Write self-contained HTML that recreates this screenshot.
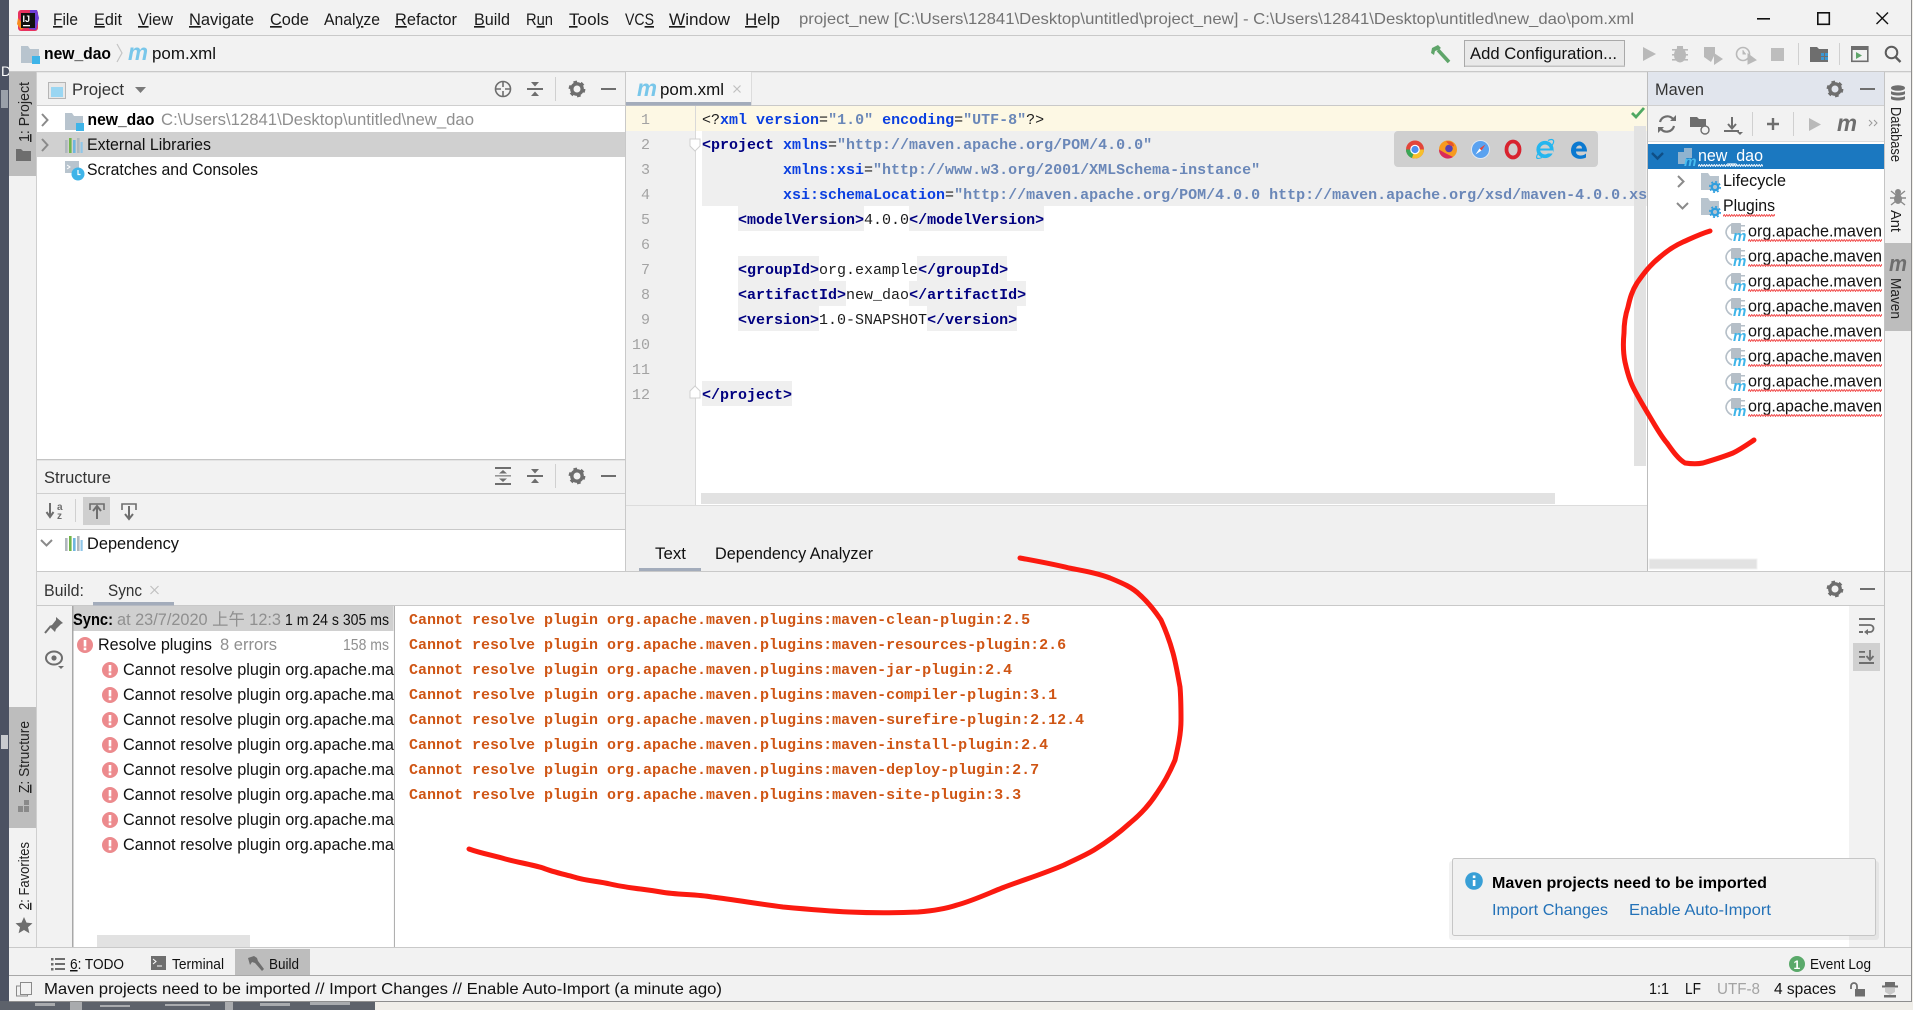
<!DOCTYPE html>
<html><head><meta charset="utf-8"><title>project_new</title>
<style>
html,body{margin:0;padding:0;width:1913px;height:1010px;overflow:hidden;background:#f0eee9}
svg{display:block}
text{font-family:"Liberation Sans","Noto Sans CJK SC",sans-serif;font-size:16.5px;fill:#111;white-space:pre}
.m{font-size:16.5px;fill:#1a1a1a}
.g{fill:#8f8f8f}
.b{font-weight:bold;fill:#000}
.c{font-family:"Liberation Mono",monospace;font-size:15px;fill:#1c1c1c}
.tag{font-weight:bold;fill:#000080}
.at{font-weight:bold;fill:#0a3fe0}
.v{fill:#6a87b8;font-weight:bold}
.n{font-family:"Liberation Mono",monospace;font-size:15px;fill:#a3a3a3;text-anchor:end}
.o{font-family:"Liberation Mono",monospace;font-size:15px;font-weight:bold;fill:#cf5514}
.s{font-size:14.5px}
.v90{font-size:14.5px;fill:#222}
.lnk{fill:#2472b8;font-size:16px}
</style></head><body>
<svg width="1913" height="1010" viewBox="0 0 1913 1010" xmlns="http://www.w3.org/2000/svg">
<defs>
<pattern id="wr" width="5" height="3" patternUnits="userSpaceOnUse"><path d="M0 2.5L1.25 .5L2.5 2.5L3.75 .5L5 2.5" fill="none" stroke="#f04545" stroke-width=".9"/></pattern>
<pattern id="ww" width="5" height="3" patternUnits="userSpaceOnUse"><path d="M0 2.5L1.25 .5L2.5 2.5L3.75 .5L5 2.5" fill="none" stroke="#fff" stroke-width=".9"/></pattern>
<g id="gear"><circle r="5.2" fill="none" stroke="#6e6e6e" stroke-width="3.4"/><circle r="7.2" fill="none" stroke="#6e6e6e" stroke-width="2.4" stroke-dasharray="3.6 3.94"/></g>
<g id="collapse" fill="#6e6e6e"><rect x="-8" y="-1" width="16" height="2"/><path d="M-4 -7h8l-4 4.5zM-4 7h8l-4 -4.5z"/></g>
<g id="expand" fill="#6e6e6e"><rect x="-8" y="-9" width="16" height="2"/><rect x="-8" y="7" width="16" height="2"/><rect x="-8" y="-1" width="16" height="1.6" opacity=".7"/><path d="M-4 -2.5h8l-4 -3.5zM-4 2.5h8l-4 3.5z"/></g>
<g id="modf"><path d="M0 0h7l2 3h9v14H0z" fill="#b8c4ce"/><rect x="11" y="10" width="8" height="8" fill="#3fb4e8"/></g>
<g id="lib"><rect x="0" y="2" width="2.6" height="13" fill="#b0b7bd"/><rect x="4" y="0" width="2.6" height="15" fill="#71b54a"/><rect x="8" y="2" width="2.6" height="13" fill="#6fb6e0"/><rect x="12" y="0" width="2.6" height="15" fill="#b0b7bd"/><rect x="15.5" y="4" width="2.2" height="11" fill="#8fc6e8"/></g>
<g id="err"><circle r="8" fill="#ec8a8d"/><rect x="-1.3" y="-5" width="2.6" height="6.5" fill="#fff"/><rect x="-1.3" y="2.6" width="2.6" height="2.6" fill="#fff"/></g>
<g id="plug"><path d="M0 9a9 9 0 0 1 7-8" fill="none" stroke="#b5bfc8" stroke-width="1.6"/><path d="M0 9a9 9 0 0 0 6 8" fill="none" stroke="#b5bfc8" stroke-width="1.6"/><rect x="5" y="0" width="10" height="11" rx="1" fill="#b5bfc8"/><rect x="14" y="2" width="5" height="1.5" fill="#b5bfc8"/><rect x="14" y="7" width="5" height="1.5" fill="#b5bfc8"/><text x="7" y="18" style="font-size:15px;font-style:italic;font-weight:bold;fill:#3fb4e8">m</text></g>
<g id="lcf"><path d="M0 0h7l2 3h9v14H0z" fill="#b8c4ce"/><circle cx="14" cy="14" r="3.2" fill="none" stroke="#2f9ede" stroke-width="2.4"/><circle cx="14" cy="14" r="5.2" fill="none" stroke="#2f9ede" stroke-width="1.6" stroke-dasharray="2 2.08"/></g>
</defs>

<!-- desktop -->
<rect width="1913" height="1010" fill="#f0eee9"/>
<rect x="0" y="0" width="9" height="1010" fill="#4c5262"/>
<rect x="0" y="1001" width="375" height="9" fill="#5d626b"/>
<g fill="#a9abae"><rect x="35" y="1003" width="20" height="3"/><rect x="70" y="1002" width="12" height="8"/><rect x="100" y="1005" width="30" height="2"/><rect x="165" y="1004" width="45" height="2"/><rect x="225" y="1002" width="8" height="8"/><rect x="260" y="1003" width="30" height="3"/><rect x="310" y="1002" width="40" height="3"/></g>
<text x="1" y="76" style="font-size:14px;fill:#fff">D</text>
<rect x="1" y="90" width="7" height="18" fill="#9aa0a9"/>
<rect x="1" y="735" width="7" height="14" fill="#c8cace"/>

<!-- window -->
<rect x="9" y="0" width="1902" height="1001" fill="#f2f2f2"/>
<rect x="1911" y="0" width="1" height="1001" fill="#8e8e8e"/>
<rect x="9" y="1001" width="1903" height="1" fill="#8e8e8e"/>

<!-- title bar -->
<g>
<rect x="18" y="10" width="20" height="21" rx="3" fill="#e8325f"/>
<path d="M30 10h7l2 8-3 12-7-1z" fill="#6f3fd6"/>
<path d="M18 18l-1 6 4 6 4-3z" fill="#f78a1e"/>
<rect x="21" y="13" width="14" height="15" fill="#111"/>
<text x="22.5" y="22" style="font-size:9px;font-weight:bold;fill:#fff">IJ</text>
<rect x="23" y="25" width="7" height="1.3" fill="#fff"/>
</g>
<text class="m" x="53" y="25" textLength="25" lengthAdjust="spacingAndGlyphs"><tspan text-decoration="underline">F</tspan>ile</text>
<text class="m" x="94" y="25" textLength="28" lengthAdjust="spacingAndGlyphs"><tspan text-decoration="underline">E</tspan>dit</text>
<text class="m" x="138" y="25" textLength="35" lengthAdjust="spacingAndGlyphs"><tspan text-decoration="underline">V</tspan>iew</text>
<text class="m" x="189" y="25" textLength="65" lengthAdjust="spacingAndGlyphs"><tspan text-decoration="underline">N</tspan>avigate</text>
<text class="m" x="270" y="25" textLength="39" lengthAdjust="spacingAndGlyphs"><tspan text-decoration="underline">C</tspan>ode</text>
<text class="m" x="324" y="25" textLength="56" lengthAdjust="spacingAndGlyphs">Anal<tspan text-decoration="underline">y</tspan>ze</text>
<text class="m" x="395" y="25" textLength="62" lengthAdjust="spacingAndGlyphs"><tspan text-decoration="underline">R</tspan>efactor</text>
<text class="m" x="474" y="25" textLength="36" lengthAdjust="spacingAndGlyphs"><tspan text-decoration="underline">B</tspan>uild</text>
<text class="m" x="526" y="25" textLength="27" lengthAdjust="spacingAndGlyphs">R<tspan text-decoration="underline">u</tspan>n</text>
<text class="m" x="569" y="25" textLength="40" lengthAdjust="spacingAndGlyphs"><tspan text-decoration="underline">T</tspan>ools</text>
<text class="m" x="625" y="25" textLength="29" lengthAdjust="spacingAndGlyphs">VC<tspan text-decoration="underline">S</tspan></text>
<text class="m" x="669" y="25" textLength="61" lengthAdjust="spacingAndGlyphs"><tspan text-decoration="underline">W</tspan>indow</text>
<text class="m" x="745" y="25" textLength="35" lengthAdjust="spacingAndGlyphs"><tspan text-decoration="underline">H</tspan>elp</text>
<text x="799" y="24" textLength="835" lengthAdjust="spacingAndGlyphs" style="fill:#737373;font-size:16px">project_new [C:\Users\12841\Desktop\untitled\project_new] - C:\Users\12841\Desktop\untitled\new_dao\pom.xml</text>
<rect x="1757" y="18" width="13" height="1.6" fill="#111"/>
<rect x="1817.8" y="12.8" width="11.5" height="11.5" fill="none" stroke="#111" stroke-width="1.6"/>
<path d="M1876.5 12.5l11.5 11.5M1888 12.5l-11.5 11.5" stroke="#111" stroke-width="1.4" fill="none"/>
<rect x="9" y="35" width="1902" height="1" fill="#c9c9c9"/>

<!-- nav bar -->
<use href="#modf" transform="translate(21,46)"/>
<text x="44" y="59" textLength="67" lengthAdjust="spacingAndGlyphs" style="font-weight:bold;font-size:16.5px;fill:#000">new_dao</text>
<path d="M117 44l5 9-5 9" fill="none" stroke="#c4c4c4" stroke-width="1.2"/>
<text x="128" y="60" textLength="20" lengthAdjust="spacingAndGlyphs" style="font-size:23px;font-style:italic;font-weight:bold;fill:#79c7ea">m</text>
<text x="152" y="59" textLength="64" lengthAdjust="spacingAndGlyphs">pom.xml</text>
<path d="M1438 50l11 12" stroke="#5fa56a" stroke-width="3.6" fill="none"/>
<path d="M1431 53l1-5 6-3 3 3-3 2-3 1-1 4z" fill="#5fa56a"/>
<rect x="1464.5" y="40.5" width="160" height="26" fill="#e9e9e9" stroke="#a9a9a9"/>
<rect x="1465" y="65.5" width="160" height="1.5" fill="#c2c2c2"/>
<text x="1470" y="59" textLength="147" lengthAdjust="spacingAndGlyphs" style="font-size:16.5px">Add Configuration...</text>
<path d="M1643 47l13 7-13 7z" fill="#b9b9b9"/>
<g fill="#b9b9b9"><ellipse cx="1680" cy="55" rx="6" ry="7.5"/><rect x="1672" y="49" width="16" height="1.6"/><rect x="1672" y="54" width="16" height="1.6"/><rect x="1672" y="59" width="16" height="1.6"/><rect x="1677" y="46" width="6" height="3"/></g>
<path d="M1704 47h11v7l-4 8-7-5zM1714 53l9 6-9 6z" fill="#b9b9b9"/>
<circle cx="1743" cy="54" r="6.5" fill="none" stroke="#b9b9b9" stroke-width="1.6"/><path d="M1743 50v4h3M1748 54l8 6-8 4z" fill="#b9b9b9" stroke="#b9b9b9"/>
<rect x="1771" y="48" width="13" height="13" fill="#bdbdbd"/>
<rect x="1798" y="43" width="1" height="22" fill="#d0d0d0"/>
<path d="M1810 47h7l2 2h9v13h-18z" fill="#6e6e6e"/><g fill="#3a97d4"><rect x="1821" y="53" width="3" height="3"/><rect x="1825" y="53" width="3" height="3"/><rect x="1821" y="57" width="3" height="3"/><rect x="1825" y="57" width="3" height="3"/></g>
<rect x="1839" y="43" width="1" height="22" fill="#d0d0d0"/>
<rect x="1851.8" y="46.8" width="16" height="14.5" fill="none" stroke="#6e6e6e" stroke-width="1.6"/><rect x="1852" y="47" width="16" height="3" fill="#6e6e6e"/><path d="M1856 52l6 3.5-6 3.5z" fill="#5fa56a"/>
<circle cx="1891.5" cy="52.5" r="5.8" fill="none" stroke="#5c5c5c" stroke-width="2"/><path d="M1895.5 57l5 5" stroke="#5c5c5c" stroke-width="2.4"/>
<rect x="9" y="71" width="1902" height="1.3" fill="#c9c9c9"/>

<!-- left strip -->
<rect x="9" y="72" width="27" height="104" fill="#bdbdbd"/>
<rect x="9" y="707" width="27" height="121" fill="#bdbdbd"/>
<rect x="36" y="72" width="1" height="875" fill="#cfcfcf"/>
<text class="v90" transform="translate(29,142) rotate(-90)" textLength="60" lengthAdjust="spacingAndGlyphs"><tspan text-decoration="underline">1</tspan>: Project</text>
<path d="M16 149h5l2 2h8v10H16z" fill="#6e6e6e"/>
<text class="v90" transform="translate(29,793) rotate(-90)" textLength="72" lengthAdjust="spacingAndGlyphs"><tspan text-decoration="underline">Z</tspan>: Structure</text>
<g fill="#8a8a8a"><rect x="24" y="800" width="5" height="5"/><rect x="18" y="806" width="5" height="6"/><rect x="24" y="806" width="5" height="6"/></g>
<text class="v90" transform="translate(29,910) rotate(-90)" textLength="68" lengthAdjust="spacingAndGlyphs"><tspan text-decoration="underline">2</tspan>: Favorites</text>
<path d="M24 917l2.5 5.6 6 .6-4.5 4 1.4 6-5.4-3.2-5.4 3.2 1.4-6-4.5-4 6-.6z" fill="#6e6e6e"/>

<!-- project panel -->
<rect x="37" y="106" width="588" height="353" fill="#fff"/>
<rect x="37" y="105" width="588" height="1" fill="#cfcfcf"/>
<rect x="48.5" y="82.5" width="17" height="16" fill="#e8e8e8" stroke="#b5b5b5"/><rect x="51" y="87" width="12" height="10" fill="#9ad6f2"/>
<text x="72" y="95" textLength="52" lengthAdjust="spacingAndGlyphs" style="fill:#333">Project</text>
<path d="M135 87h11l-5.500 6z" fill="#7a7a7a"/>
<circle cx="503" cy="89" r="7.500" fill="none" stroke="#6e6e6e" stroke-width="1.6"/><path d="M503 82v5M503 91v5M496 89h5M505 89h5" stroke="#6e6e6e" stroke-width="1.6"/>
<use href="#collapse" transform="translate(535,89)"/>
<rect x="555" y="77" width="1" height="24" fill="#d0d0d0"/>
<use href="#gear" transform="translate(577,89)"/>
<rect x="601" y="88" width="15" height="2" fill="#6e6e6e"/>
<rect x="37" y="132" width="588" height="25" fill="#d0d0d0"/>
<path d="M42 114l5.500 6-5.500 6" fill="none" stroke="#8a8a8a" stroke-width="2"/>
<path d="M42 139l5.500 6-5.500 6" fill="none" stroke="#8a8a8a" stroke-width="2"/>
<use href="#modf" transform="translate(65,113)"/>
<text x="87.500" y="125" textLength="67" lengthAdjust="spacingAndGlyphs" style="font-weight:bold;fill:#000">new_dao</text>
<text x="161" y="125" textLength="313" lengthAdjust="spacingAndGlyphs" class="g">C:\Users\12841\Desktop\untitled\new_dao</text>
<use href="#lib" transform="translate(65,138)"/>
<text x="87" y="150" textLength="124" lengthAdjust="spacingAndGlyphs">External Libraries</text>
<path d="M65 161h14v12H65z" fill="#b8c4ce"/><path d="M67 165l3 2-3 2" stroke="#fff" fill="none"/>
<circle cx="78" cy="174" r="6.500" fill="#3fb4e8"/><path d="M78 170v4.500h2.500" stroke="#fff" fill="none" stroke-width="1.200"/>
<text x="87" y="175" textLength="171" lengthAdjust="spacingAndGlyphs">Scratches and Consoles</text>

<!-- structure -->
<rect x="37" y="459" width="588" height="1.300" fill="#c4c4c4"/>
<rect x="37" y="493" width="588" height="1" fill="#cfcfcf"/>
<rect x="37" y="529" width="588" height="1" fill="#c9c9c9"/>
<rect x="37" y="530" width="588" height="41" fill="#fff"/>
<text x="44" y="483" textLength="67" lengthAdjust="spacingAndGlyphs" style="fill:#333">Structure</text>
<use href="#expand" transform="translate(503,476)"/>
<use href="#collapse" transform="translate(535,476)"/>
<rect x="555" y="464" width="1" height="24" fill="#d0d0d0"/>
<use href="#gear" transform="translate(577,476)"/>
<rect x="601" y="475" width="15" height="2" fill="#6e6e6e"/>
<path d="M50 503v13M46.500 512l3.500 5 3.500-5" fill="none" stroke="#6e6e6e" stroke-width="2"/>
<text x="57" y="510" style="font-size:10px;font-weight:bold;fill:#6e6e6e">a</text><text x="57" y="519" style="font-size:10px;font-weight:bold;fill:#6e6e6e">z</text>
<rect x="75" y="499" width="1" height="23" fill="#d0d0d0"/>
<rect x="83" y="497" width="27" height="28" fill="#cfcfcf"/>
<path d="M90 510v-6h14v6" fill="none" stroke="#6e6e6e" stroke-width="1.600"/><path d="M97 519v-12M93 511l4-5 4 5" fill="none" stroke="#6e6e6e" stroke-width="2"/>
<path d="M122 510v-6h14v6" fill="none" stroke="#6e6e6e" stroke-width="1.600"/><path d="M129 506v12M125 514l4 5 4-5" fill="none" stroke="#6e6e6e" stroke-width="2"/>
<path d="M41 540l5.500 5.500 5.500-5.500" fill="none" stroke="#8a8a8a" stroke-width="2"/>
<use href="#lib" transform="translate(65,536)"/>
<text x="87" y="549" textLength="92" lengthAdjust="spacingAndGlyphs">Dependency</text>

<!-- editor -->
<rect x="625" y="72" width="1" height="500" fill="#c9c9c9"/>
<rect x="625" y="105" width="1022" height="1" fill="#c9c9c9"/>
<rect x="626" y="72" width="125" height="33" fill="#f5f5f5"/>
<rect x="626" y="102" width="125" height="3.500" fill="#a3acbb"/>
<rect x="751" y="72" width="1" height="33" fill="#dcdcdc"/>
<text x="637" y="96" textLength="20" lengthAdjust="spacingAndGlyphs" style="font-size:23px;font-style:italic;font-weight:bold;fill:#79c7ea">m</text>
<text x="660" y="95" textLength="64" lengthAdjust="spacingAndGlyphs">pom.xml</text>
<path d="M733.500 85.500l7 7M740.500 85.500l-7 7" stroke="#c0c0c0" stroke-width="1.200"/>
<rect x="626" y="106" width="1021" height="399" fill="#fff"/>
<rect x="626" y="106" width="69" height="399" fill="#f0f0f0"/>
<rect x="626" y="106" width="1021" height="25" fill="#fdf8e4"/>
<rect x="695" y="106" width="1" height="399" fill="#d9d9d9"/>
<rect x="702" y="131" width="945" height="75" fill="#efefef"/>
<g fill="#efefef">
<rect x="738" y="206" width="126" height="25"/><rect x="909" y="206" width="135" height="25"/>
<rect x="738" y="256" width="81" height="25"/><rect x="917" y="256" width="90" height="25"/>
<rect x="738" y="281" width="108" height="25"/><rect x="909" y="281" width="117" height="25"/>
<rect x="738" y="306" width="81" height="25"/><rect x="927" y="306" width="90" height="25"/>
<rect x="702" y="381" width="90" height="25"/>
</g>
<g class="nums">
<text class="n" x="650" y="124">1</text><text class="n" x="650" y="149">2</text><text class="n" x="650" y="174">3</text><text class="n" x="650" y="199">4</text><text class="n" x="650" y="224">5</text><text class="n" x="650" y="249">6</text><text class="n" x="650" y="274">7</text><text class="n" x="650" y="299">8</text><text class="n" x="650" y="324">9</text><text class="n" x="650" y="349">10</text><text class="n" x="650" y="374">11</text><text class="n" x="650" y="399">12</text>
</g>
<path d="M690 139h10v7l-5 5-5-5z" fill="#fff" stroke="#d0d0d0"/>
<path d="M690 398h10v-7l-5-5-5 5z" fill="#fff" stroke="#d0d0d0"/>
<rect x="1634" y="126" width="12" height="340" fill="#e2e2e2"/>
<svg x="702" y="106" width="945" height="300">
<text class="c" x="0" y="18">&lt;?<tspan class="at">xml version</tspan><tspan>=</tspan><tspan class="v">"1.0"</tspan><tspan class="at"> encoding</tspan><tspan>=</tspan><tspan class="v">"UTF-8"</tspan>?&gt;</text>
<text class="c" x="0" y="43"><tspan class="tag">&lt;project</tspan><tspan class="at"> xmlns</tspan><tspan>=</tspan><tspan class="v">"http://maven.apache.org/POM/4.0.0"</tspan></text>
<text class="c" x="0" y="68">         <tspan class="at">xmlns:xsi</tspan><tspan>=</tspan><tspan class="v">"http://www.w3.org/2001/XMLSchema-instance"</tspan></text>
<text class="c" x="0" y="93">         <tspan class="at">xsi:schemaLocation</tspan><tspan>=</tspan><tspan class="v">"http://maven.apache.org/POM/4.0.0 http://maven.apache.org/xsd/maven-4.0.0.xsd"</tspan></text>
<text class="c" x="0" y="118">    <tspan class="tag">&lt;modelVersion&gt;</tspan>4.0.0<tspan class="tag">&lt;/modelVersion&gt;</tspan></text>
<text class="c" x="0" y="168">    <tspan class="tag">&lt;groupId&gt;</tspan>org.example<tspan class="tag">&lt;/groupId&gt;</tspan></text>
<text class="c" x="0" y="193">    <tspan class="tag">&lt;artifactId&gt;</tspan>new_dao<tspan class="tag">&lt;/artifactId&gt;</tspan></text>
<text class="c" x="0" y="218">    <tspan class="tag">&lt;version&gt;</tspan>1.0-SNAPSHOT<tspan class="tag">&lt;/version&gt;</tspan></text>
<text class="c" x="0" y="293"><tspan class="tag">&lt;/project&gt;</tspan></text>
</svg>
<path d="M1632 113l4 4 8-9" fill="none" stroke="#4fa862" stroke-width="2.800"/>
<rect x="701" y="493" width="854" height="11" fill="#e2e2e2"/>
<rect x="626" y="505" width="1021" height="1" fill="#dcdcdc"/>
<rect x="626" y="506" width="1021" height="65" fill="#f0f0f0"/>
<rect x="639" y="568" width="62" height="3.500" fill="#a3acbb"/>
<text x="655" y="559" textLength="31" lengthAdjust="spacingAndGlyphs">Text</text>
<text x="715" y="559" textLength="158" lengthAdjust="spacingAndGlyphs">Dependency Analyzer</text>

<!-- browser popup -->
<rect x="1394" y="131" width="204" height="36" rx="4" fill="#cfcfcf"/>
<g transform="translate(1415,149.500)"><circle r="9" fill="#e2453a"/><path d="M0 0L-9 0A9 9 0 0 0 -3 8.500z" fill="#3aa757"/><path d="M0 0L-3 8.500A9 9 0 0 0 9 0z" fill="#f6c02c"/><circle r="4.800" fill="#fff"/><circle r="3.600" fill="#4d8ef0"/></g>
<g transform="translate(1448,149.500)"><circle r="9" fill="#f79a1f"/><path d="M-9 0a9 9 0 0 0 14 7.500l-8-4z" fill="#d92b5a"/><circle cx="1" cy="-1" r="3.800" fill="#5a3fb0"/><path d="M-2-8c6-1 8 2 8 5l-4-1z" fill="#e8552a"/></g>
<g transform="translate(1480.500,149.500)"><circle r="9" fill="#5aa2f0" stroke="#dfe7f2"/><path d="M5-5L1 1-1-1z" fill="#e8453a"/><path d="M-5 5L-1-1 1 1z" fill="#fff"/></g>
<g transform="translate(1513,149.500)"><ellipse rx="6.500" ry="8" fill="none" stroke="#d8232f" stroke-width="3.800"/></g>
<g transform="translate(1545,149.500)"><circle r="6.800" fill="none" stroke="#25b6ef" stroke-width="3.600"/><rect x="-5" y="-1" width="10" height="2" fill="#25b6ef"/><rect x="1" y="1" width="7" height="3" fill="#cfcfcf"/><path d="M3-9c4-2 8-1 4 5M-7 4c-3 5-1 6 4 4" fill="none" stroke="#25b6ef" stroke-width="1.200"/></g>
<g transform="translate(1579,149.500)"><path d="M-8 1c0-6 4-9 8-9s8 4 8 10H-3c0 5 7 5 10 2v4c-6 3-15 1-15-7zM-3-1h6c0-4-5-4-6 0z" fill="#0b79d0"/></g>

<!-- maven panel -->
<rect x="1647" y="72" width="1" height="500" fill="#bdbdbd"/>
<rect x="1648" y="72" width="236" height="33" fill="#e1e5ed"/>
<rect x="1648" y="105" width="236" height="1" fill="#cfcfcf"/>
<rect x="1648" y="106" width="236" height="35" fill="#f2f2f2"/>
<rect x="1648" y="141" width="236" height="430" fill="#fff"/>
<rect x="1648" y="141" width="236" height="1" fill="#dcdcdc"/>
<text x="1655" y="95" textLength="49" lengthAdjust="spacingAndGlyphs" style="fill:#333">Maven</text>
<use href="#gear" transform="translate(1835,89)"/>
<rect x="1860" y="88" width="15" height="2" fill="#6e6e6e"/>
<path d="M1660 122a7.500 7.500 0 0 1 13-3M1674 126a7.500 7.500 0 0 1-13 3" fill="none" stroke="#6e6e6e" stroke-width="2.200"/><path d="M1670 121h6v-6zM1664 127h-6v6z" fill="#6e6e6e"/>
<path d="M1690 117h7l2 2h7v8h-16z" fill="#6e6e6e"/><circle cx="1705" cy="130" r="4" fill="#f2f2f2" stroke="#6e6e6e" stroke-width="1.400"/>
<path d="M1732 117v11M1728 124l4 4.500 4-4.500" fill="none" stroke="#6e6e6e" stroke-width="2"/><rect x="1724" y="130" width="15" height="2" fill="#6e6e6e"/><path d="M1737 132h6l-3 3z" fill="#6e6e6e"/>
<rect x="1752" y="112" width="1" height="24" fill="#d0d0d0"/>
<path d="M1773 118v12M1767 124h12" stroke="#6e6e6e" stroke-width="2.400"/>
<rect x="1793" y="112" width="1" height="24" fill="#d0d0d0"/>
<path d="M1809 118l12 6.500-12 6.500z" fill="#b9b9b9"/>
<text x="1837" y="131" textLength="20" lengthAdjust="spacingAndGlyphs" style="font-size:23px;font-style:italic;font-weight:bold;fill:#6e6e6e">m</text>
<path d="M1869 120l3 3-3 3M1874 120l3 3-3 3" fill="none" stroke="#9a9a9a" stroke-width="1"/>
<rect x="1648" y="144" width="236" height="25" fill="#1b78c0"/>
<path d="M1652 153l5.500 5.500 5.500-5.500" fill="none" stroke="#0f4f86" stroke-width="2.400"/>
<path d="M1678 162v-10h6v-4h8v10h-6v6h-8z" fill="#8fb3cf"/><text x="1684" y="166" style="font-size:14px;font-style:italic;font-weight:bold;fill:#49bdf0">m</text>
<text x="1698" y="161" textLength="65" lengthAdjust="spacingAndGlyphs" style="fill:#fff;font-size:17px">new_dao</text>
<rect width="65" height="3" fill="url(#ww)" transform="translate(1698,164)"/>
<path d="M1678 176l5.500 5.500-5.500 5.500" fill="none" stroke="#8a8a8a" stroke-width="2"/>
<use href="#lcf" transform="translate(1701,173)"/>
<text x="1723" y="186" textLength="63" lengthAdjust="spacingAndGlyphs" style="font-size:17px">Lifecycle</text>
<path d="M1677 203l5.500 5.500 5.500-5.500" fill="none" stroke="#8a8a8a" stroke-width="2"/>
<use href="#lcf" transform="translate(1701,198)"/>
<text x="1723" y="211" textLength="52" lengthAdjust="spacingAndGlyphs" style="font-size:17px">Plugins</text>
<rect width="52" height="3" fill="url(#wr)" transform="translate(1723,214)"/>
<g id="plugins">
<use href="#plug" transform="translate(1726,223)"/><text x="1748" y="236.500" textLength="134" lengthAdjust="spacingAndGlyphs" style="font-size:17px">org.apache.maven</text><rect width="134" height="3" fill="url(#wr)" transform="translate(1748,239)"/>
<use href="#plug" transform="translate(1726,248)"/><text x="1748" y="261.500" textLength="134" lengthAdjust="spacingAndGlyphs" style="font-size:17px">org.apache.maven</text><rect width="134" height="3" fill="url(#wr)" transform="translate(1748,264)"/>
<use href="#plug" transform="translate(1726,273)"/><text x="1748" y="286.500" textLength="134" lengthAdjust="spacingAndGlyphs" style="font-size:17px">org.apache.maven</text><rect width="134" height="3" fill="url(#wr)" transform="translate(1748,289)"/>
<use href="#plug" transform="translate(1726,298)"/><text x="1748" y="311.500" textLength="134" lengthAdjust="spacingAndGlyphs" style="font-size:17px">org.apache.maven</text><rect width="134" height="3" fill="url(#wr)" transform="translate(1748,314)"/>
<use href="#plug" transform="translate(1726,323)"/><text x="1748" y="336.500" textLength="134" lengthAdjust="spacingAndGlyphs" style="font-size:17px">org.apache.maven</text><rect width="134" height="3" fill="url(#wr)" transform="translate(1748,339)"/>
<use href="#plug" transform="translate(1726,348)"/><text x="1748" y="361.500" textLength="134" lengthAdjust="spacingAndGlyphs" style="font-size:17px">org.apache.maven</text><rect width="134" height="3" fill="url(#wr)" transform="translate(1748,364)"/>
<use href="#plug" transform="translate(1726,373)"/><text x="1748" y="386.500" textLength="134" lengthAdjust="spacingAndGlyphs" style="font-size:17px">org.apache.maven</text><rect width="134" height="3" fill="url(#wr)" transform="translate(1748,389)"/>
<use href="#plug" transform="translate(1726,398)"/><text x="1748" y="411.500" textLength="134" lengthAdjust="spacingAndGlyphs" style="font-size:17px">org.apache.maven</text><rect width="134" height="3" fill="url(#wr)" transform="translate(1748,414)"/>
</g>
<rect x="1649" y="559" width="108" height="10" fill="#e2e2e2" stroke="#f2f2f2"/>

<!-- right strip -->
<rect x="1884" y="72" width="1" height="875" fill="#c4c4c4"/>
<rect x="1885" y="243" width="26" height="88" fill="#bdbdbd"/>
<g fill="#6e6e6e"><ellipse cx="1898" cy="88" rx="7" ry="2.800"/><path d="M1891 91c2 2 12 2 14 0v3c-2 2-12 2-14 0zM1891 96c2 2 12 2 14 0v3c-2 2-12 2-14 0z"/></g>
<text class="v90" transform="translate(1891,107) rotate(90)" textLength="55" lengthAdjust="spacingAndGlyphs">Database</text>
<g fill="#8a8a8a"><ellipse cx="1898" cy="199" rx="4" ry="5"/><circle cx="1898" cy="192" r="3"/><path d="M1891 191l5 4M1905 191l-5 4M1890 198h16M1891 205l5-4M1905 205l-5-4" stroke="#8a8a8a" stroke-width="1.400"/></g>
<text class="v90" transform="translate(1891,210) rotate(90)" textLength="22" lengthAdjust="spacingAndGlyphs">Ant</text>
<text x="1889" y="271" textLength="18" lengthAdjust="spacingAndGlyphs" style="font-size:22px;font-style:italic;font-weight:bold;fill:#6e6e6e">m</text>
<text class="v90" transform="translate(1891,278) rotate(90)" textLength="41" lengthAdjust="spacingAndGlyphs">Maven</text>

<!-- build panel -->
<rect x="37" y="571" width="1874" height="1" fill="#c9c9c9"/>
<rect x="37" y="572" width="1847" height="33" fill="#f2f2f2"/>
<rect x="37" y="605" width="1847" height="1" fill="#c9c9c9"/>
<text x="44" y="596" textLength="40" lengthAdjust="spacingAndGlyphs" style="fill:#333">Build:</text>
<text x="108" y="596" textLength="34" lengthAdjust="spacingAndGlyphs" style="fill:#333">Sync</text>
<path d="M150.500 586l8 8M158.500 586l-8 8" stroke="#c0c0c0" stroke-width="1.200"/>
<rect x="93" y="602" width="81" height="3.500" fill="#a3acbb"/>
<use href="#gear" transform="translate(1835,589)"/>
<rect x="1860" y="588" width="15" height="2" fill="#6e6e6e"/>
<rect x="72" y="606" width="1.500" height="341" fill="#a8a8a8"/>
<rect x="73.500" y="606" width="320" height="341" fill="#fff"/>
<rect x="394" y="606" width="1" height="341" fill="#b0b0b0"/>
<rect x="395" y="606" width="1454" height="341" fill="#fff"/>
<path d="M56 617l7 6-2 1-5 5-1 3-6-6 3-1 4-5z" fill="#6e6e6e"/><path d="M50 627l-5 6" stroke="#6e6e6e" stroke-width="2"/>
<ellipse cx="54" cy="658" rx="8" ry="6.500" fill="none" stroke="#6e6e6e" stroke-width="2"/><circle cx="54" cy="658" r="2.600" fill="#6e6e6e"/><path d="M58 666h6l-3 3z" fill="#6e6e6e"/>
<rect x="73.500" y="606" width="320" height="25" fill="#d0d0d0"/>
<text x="73" y="625" textLength="40" lengthAdjust="spacingAndGlyphs" style="font-weight:bold;fill:#000">Sync:</text>
<text x="117" y="625" textLength="164" lengthAdjust="spacingAndGlyphs" class="g">at 23/7/2020 上午 12:3</text>
<text x="285" y="625" textLength="104" lengthAdjust="spacingAndGlyphs" style="font-size:15.500px">1 m 24 s 305 ms</text>
<use href="#err" transform="translate(85,645)"/>
<text x="98" y="650" textLength="114" lengthAdjust="spacingAndGlyphs">Resolve plugins</text>
<text x="220" y="650" textLength="57" lengthAdjust="spacingAndGlyphs" class="g">8 errors</text>
<text x="343" y="650" textLength="46" lengthAdjust="spacingAndGlyphs" class="g" style="font-size:15.500px">158 ms</text>
<use href="#err" transform="translate(110,670)"/><text x="123" y="675" textLength="271" lengthAdjust="spacingAndGlyphs">Cannot resolve plugin org.apache.ma</text>
<use href="#err" transform="translate(110,695)"/><text x="123" y="700" textLength="271" lengthAdjust="spacingAndGlyphs">Cannot resolve plugin org.apache.ma</text>
<use href="#err" transform="translate(110,720)"/><text x="123" y="725" textLength="271" lengthAdjust="spacingAndGlyphs">Cannot resolve plugin org.apache.ma</text>
<use href="#err" transform="translate(110,745)"/><text x="123" y="750" textLength="271" lengthAdjust="spacingAndGlyphs">Cannot resolve plugin org.apache.ma</text>
<use href="#err" transform="translate(110,770)"/><text x="123" y="775" textLength="271" lengthAdjust="spacingAndGlyphs">Cannot resolve plugin org.apache.ma</text>
<use href="#err" transform="translate(110,795)"/><text x="123" y="800" textLength="271" lengthAdjust="spacingAndGlyphs">Cannot resolve plugin org.apache.ma</text>
<use href="#err" transform="translate(110,820)"/><text x="123" y="825" textLength="271" lengthAdjust="spacingAndGlyphs">Cannot resolve plugin org.apache.ma</text>
<use href="#err" transform="translate(110,845)"/><text x="123" y="850" textLength="271" lengthAdjust="spacingAndGlyphs">Cannot resolve plugin org.apache.ma</text>
<rect x="97" y="935" width="153" height="12" fill="#e2e2e2"/>
<text class="o" x="409" y="624">Cannot resolve plugin org.apache.maven.plugins:maven-clean-plugin:2.5</text>
<text class="o" x="409" y="649">Cannot resolve plugin org.apache.maven.plugins:maven-resources-plugin:2.6</text>
<text class="o" x="409" y="674">Cannot resolve plugin org.apache.maven.plugins:maven-jar-plugin:2.4</text>
<text class="o" x="409" y="699">Cannot resolve plugin org.apache.maven.plugins:maven-compiler-plugin:3.1</text>
<text class="o" x="409" y="724">Cannot resolve plugin org.apache.maven.plugins:maven-surefire-plugin:2.12.4</text>
<text class="o" x="409" y="749">Cannot resolve plugin org.apache.maven.plugins:maven-install-plugin:2.4</text>
<text class="o" x="409" y="774">Cannot resolve plugin org.apache.maven.plugins:maven-deploy-plugin:2.7</text>
<text class="o" x="409" y="799">Cannot resolve plugin org.apache.maven.plugins:maven-site-plugin:3.3</text>
<rect x="1849" y="606" width="35" height="341" fill="#f2f2f2"/>
<rect x="1859" y="618" width="16" height="2" fill="#6e6e6e"/><path d="M1859 625h11a3.500 3.500 0 0 1 0 7h-4" fill="none" stroke="#6e6e6e" stroke-width="1.800"/><path d="M1868 629l-4 3 4 3z" fill="#6e6e6e"/><rect x="1859" y="631" width="4" height="2" fill="#6e6e6e"/>
<rect x="1853" y="643" width="27" height="28" fill="#d0d0d0"/>
<g fill="#6e6e6e"><rect x="1859" y="651" width="6" height="1.800"/><rect x="1859" y="656" width="6" height="1.800"/><rect x="1859" y="662" width="15" height="2"/></g><path d="M1870 650v9M1866.500 656l3.500 4 3.500-4" fill="none" stroke="#6e6e6e" stroke-width="1.800"/>

<!-- notification -->
<rect x="1449" y="861" width="430" height="79" fill="#000" opacity=".05" rx="3"/>
<rect x="1452.500" y="858.500" width="423" height="77" rx="2" fill="#f1f1f1" stroke="#c6c6c6"/>
<circle cx="1474" cy="881" r="8.800" fill="#389fd6"/><rect x="1472.800" y="880" width="2.600" height="6" fill="#fff"/><rect x="1472.800" y="875.500" width="2.600" height="2.600" fill="#fff"/>
<text x="1492" y="888" textLength="275" lengthAdjust="spacingAndGlyphs" style="font-weight:bold;fill:#000;font-size:16px">Maven projects need to be imported</text>
<text x="1492" y="915" textLength="116" lengthAdjust="spacingAndGlyphs" class="lnk">Import Changes</text>
<text x="1629" y="915" textLength="142" lengthAdjust="spacingAndGlyphs" class="lnk">Enable Auto-Import</text>

<!-- bottom tool bar -->
<rect x="9" y="947" width="1902" height="1" fill="#c9c9c9"/>
<rect x="9" y="948" width="1902" height="27" fill="#f2f2f2"/>
<rect x="235" y="949" width="75" height="26" fill="#bdbdbd"/>
<g fill="#6e6e6e"><rect x="51" y="958" width="2.500" height="2.500"/><rect x="55" y="958" width="10" height="2"/><rect x="51" y="963" width="2.500" height="2.500"/><rect x="55" y="963" width="10" height="2"/><rect x="51" y="968" width="2.500" height="2.500"/><rect x="55" y="968" width="10" height="2"/></g>
<text class="s" x="70" y="969" textLength="54" lengthAdjust="spacingAndGlyphs"><tspan text-decoration="underline">6</tspan>: TODO</text>
<rect x="151" y="956" width="15" height="14" fill="#6e6e6e"/><path d="M153 959l3 2.500-3 2.500M157 966h5" fill="none" stroke="#fff" stroke-width="1"/>
<text class="s" x="172" y="969" textLength="52" lengthAdjust="spacingAndGlyphs">Terminal</text>
<path d="M248 958l6-2 3 2 1 3 6 8-2 2-7-8-3-1-2 3z" fill="#6e6e6e"/>
<text class="s" x="269" y="969" textLength="30" lengthAdjust="spacingAndGlyphs">Build</text>
<circle cx="1797" cy="964" r="8" fill="#5aa96a"/><text x="1793.500" y="969" style="font-size:12px;font-weight:bold;fill:#fff">1</text>
<text class="s" x="1810" y="969" textLength="61" lengthAdjust="spacingAndGlyphs">Event Log</text>

<!-- status bar -->
<rect x="9" y="975" width="1902" height="1" fill="#a8a8a8"/>
<rect x="9" y="976" width="1902" height="25" fill="#f2f2f2"/>
<rect x="20.500" y="982.500" width="11" height="12" fill="#f2f2f2" stroke="#8a8a8a"/><path d="M20 986h-3.500v10h11v-1" fill="none" stroke="#8a8a8a"/>
<text x="44" y="994" textLength="678" lengthAdjust="spacingAndGlyphs" style="font-size:16px">Maven projects need to be imported // Import Changes // Enable Auto-Import (a minute ago)</text>
<text x="1649" y="994" textLength="20" lengthAdjust="spacingAndGlyphs" style="font-size:16px">1:1</text>
<text x="1685" y="994" textLength="16" lengthAdjust="spacingAndGlyphs" style="font-size:16px">LF</text>
<text x="1717" y="994" textLength="43" lengthAdjust="spacingAndGlyphs" style="font-size:16px;fill:#a3a3a3">UTF-8</text>
<text x="1774" y="994" textLength="62" lengthAdjust="spacingAndGlyphs" style="font-size:16px">4 spaces</text>
<rect x="1855" y="989" width="10" height="7.500" fill="#6e6e6e"/><path d="M1851 989v-3a3 3 0 0 1 6 0v3" fill="none" stroke="#6e6e6e" stroke-width="1.800"/>
<g fill="#6e6e6e"><rect x="1885" y="982" width="10" height="4"/><rect x="1882" y="985.500" width="16" height="2"/><path d="M1885 988h10v4l-5 3-5-3z" fill="#c9c9c9"/><rect x="1884" y="995" width="12" height="2.500"/></g>

<!-- red annotations -->
<path d="M1710 231C1700 234 1692 238 1683 242C1674 246 1668 250 1660 257C1650 265 1644 273 1637 283C1632 291 1630 298 1628 307C1625 316 1624 324 1624 333C1623 343 1623 352 1625 362C1627 371 1629 379 1633 387C1638 397 1644 407 1650 417C1656 427 1661 436 1667 443C1672 450 1678 459 1685 463C1692 464 1698 464 1703 463C1713 460 1723 457 1733 453C1741 449 1748 444 1754 440" fill="none" stroke="#fb1a10" stroke-width="5" stroke-linecap="round"/>
<path d="M1020 558C1036 561 1053 564 1069 568C1084 571 1097 573 1110 578C1122 583 1132 587 1140 595C1149 603 1155 611 1161 620C1166 631 1170 642 1173 653C1176 664 1178 676 1180 687C1181 698 1181 709 1181 720C1181 734 1178 747 1175 760C1170 772 1164 783 1157 793C1150 804 1141 814 1130 823C1119 833 1107 842 1094 850C1084 856 1074 860 1064 865C1043 874 1023 880 1002 888C987 894 972 901 957 905C945 909 931 911 918 912C895 913 872 913 849 912C827 911 805 909 783 907C759 904 736 900 712 897C695 894 678 895 661 892C644 889 627 888 610 884C598 881 586 881 574 877C563 874 553 872 543 868C530 864 515 862 502 858C491 855 480 853 469 849" fill="none" stroke="#fb1a10" stroke-width="5" stroke-linecap="round"/>
</svg>
</body></html>
